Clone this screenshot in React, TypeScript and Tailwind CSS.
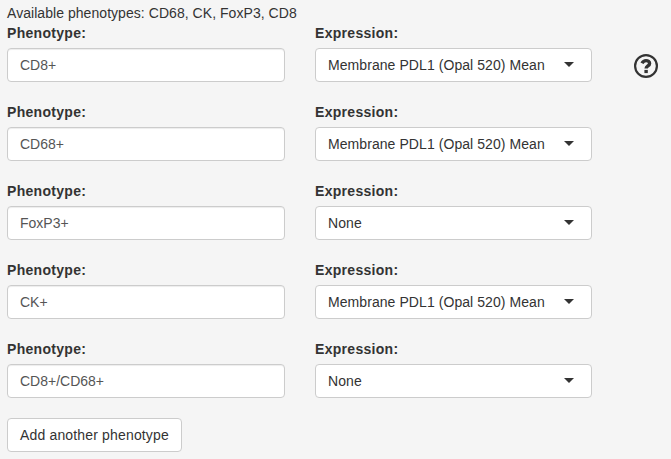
import React from "react";

const rows = [
  { phenotype: "CD8+", expression: "Membrane PDL1 (Opal 520) Mean" },
  { phenotype: "CD68+", expression: "Membrane PDL1 (Opal 520) Mean" },
  { phenotype: "FoxP3+", expression: "None" },
  { phenotype: "CK+", expression: "Membrane PDL1 (Opal 520) Mean" },
  { phenotype: "CD8+/CD68+", expression: "None" },
];

function HelpIcon() {
  return (
    <svg viewBox="0 0 24 24" className="size-6" fill="none" stroke="#333333" aria-label="Help">
      <circle cx="12" cy="12" r="10.9" strokeWidth="2.2" />
      <path d="M8 9.2C8.9 7.5 10.1 6.6 12 6.6c2 0 3.6 1.1 3.6 2.8 0 2.6-3.5 2.4-3.5 5.2" strokeWidth="3.4" />
      <path d="M10.4 15.9h3.4v3.2h-3.4z" fill="#333333" stroke="none" />
    </svg>
  );
}

export default function App() {
  return (
    <div className="h-[459px] w-[671px] overflow-hidden bg-[#f5f5f5] pl-[7px] pt-[3px] font-['Liberation_Sans',Arial,sans-serif] text-[14px] leading-5 text-[#333333]">
      <p className="tracking-[0.05px]">Available phenotypes: CD68, CK, FoxP3, CD8</p>
      <div className="flex">
        <div className="flex w-[585px] flex-col gap-5">
          {rows.map((row) => (
            <div key={row.phenotype} className="grid grid-cols-[278px_277px] gap-x-[30px]">
              <div>
                <label className="mb-[5px] block font-bold tracking-[0.3px]">Phenotype:</label>
                <input
                  readOnly
                  value={row.phenotype}
                  className="block h-[34px] w-full rounded-[4px] border border-[#cccccc] bg-white px-3 py-1.5 text-[#555555] shadow-[inset_0_1px_1px_rgba(0,0,0,0.075)] outline-none"
                />
              </div>
              <div>
                <label className="mb-[5px] block font-bold tracking-[0.3px]">Expression:</label>
                <div className="flex h-[34px] items-center justify-between rounded-[4px] border border-[#cccccc] bg-white pl-3 pr-[17px]">
                  <span className="tracking-[0.07px]">{row.expression}</span>
                  <span className="mb-0.5 border-x-[5px] border-t-[5px] border-x-transparent border-t-[#333333]" />
                </div>
              </div>
            </div>
          ))}
        </div>
        <div className="ml-[42px] mt-[31px]">
          <HelpIcon />
        </div>
      </div>
      <button className="mt-5 h-[34px] w-[175px] whitespace-nowrap rounded-[4px] border border-[#cccccc] bg-white pl-3 text-left tracking-[0.16px]">
        Add another phenotype
      </button>
    </div>
  );
}
